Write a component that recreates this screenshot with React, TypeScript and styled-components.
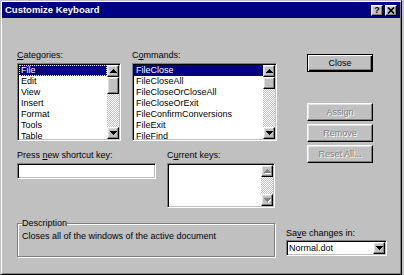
import React from 'react';
import styled, { createGlobalStyle, css } from 'styled-components';

const Global = createGlobalStyle`
  html, body { margin: 0; padding: 0; background: #c0c0c0; }
  body {
    width: 404px; height: 275px; overflow: hidden;
    font-family: "Liberation Sans", Arial, sans-serif;
    font-size: 9px; color: #000;
  }
  * { box-sizing: border-box; }
`;

const raised = css`
  background: #c0c0c0;
  border: 1px solid;
  border-color: #fff #000 #000 #fff;
  box-shadow: inset -1px -1px 0 #808080, inset 1px 1px 0 #dfdfdf;
`;

const sunken = css`
  border: 1px solid;
  border-color: #808080 #fff #fff #808080;
  box-shadow: inset 1px 1px 0 #000, inset -1px -1px 0 #c0c0c0;
  padding: 1px;
`;

const Window = styled.div`
  width: 402px; height: 275px;
  background: #c0c0c0;
  border: 1px solid;
  border-color: #c0c0c0 #000 #000 #c0c0c0;
  box-shadow: inset 1px 1px 0 #fff, inset -1px -1px 0 #808080;
  padding: 1px;
  display: flex; flex-direction: column;
`;

const TitleBar = styled.div`
  height: 16px;
  background: #000080;
  color: #fff;
  font-weight: bold;
  font-size: 9.5px;
  display: flex; align-items: center;
  padding: 0 3px 0 3px;
`;

const TitleText = styled.div`
  flex: 1;
  line-height: 16px;
  white-space: nowrap;
`;

const CapButton = styled.div<{ $gap?: boolean }>`
  ${raised};
  width: 12px; height: 11px;
  margin-left: ${p => (p.$gap ? '2px' : '0')};
  display: flex; align-items: center; justify-content: center;
  color: #000; font-weight: bold; font-size: 9px; line-height: 9px;
`;

const Content = styled.div`
  flex: 1;
  display: flex;
  padding-left: 15px;
`;

const LeftPane = styled.div`
  width: 260px;
  display: flex; flex-direction: column;
  padding-top: 31px;
`;

const Row = styled.div<{ $mt?: number }>`
  display: flex; gap: 11px;
  margin-top: ${p => p.$mt ?? 0}px;
`;

const Field = styled.div<{ $w: number }>`
  width: ${p => p.$w}px;
  display: flex; flex-direction: column;
`;

const Label = styled.div`
  line-height: 13px;
  margin-bottom: 1px;
  white-space: nowrap;
`;

const ListBox = styled.div<{ $h: number }>`
  ${sunken};
  height: ${p => p.$h}px;
  background: #fff;
  display: flex;
`;

const Items = styled.div`
  flex: 1; overflow: hidden;
`;

const Item = styled.div<{ $sel?: boolean; $focus?: boolean }>`
  height: 11px; line-height: 10px;
  padding-left: 2px;
  white-space: nowrap;
  ${p => p.$sel && css`background: #000080; color: #fff;`}
  ${p => p.$focus && css`outline: 1px dotted #ffff80; outline-offset: -1px;`}
`;

const SBar = styled.div`
  width: 12px;
  display: flex; flex-direction: column;
`;

const SButton = styled.div`
  ${raised};
  width: 12px; height: 12px;
  display: flex; align-items: center; justify-content: center;
`;

const Track = styled.div`
  flex: 1;
  background: repeating-conic-gradient(#c0c0c0 0 25%, #fff 0 50%) 0 0 / 2px 2px;
`;

const Thumb = styled.div<{ $h: number }>`
  ${raised};
  height: ${p => p.$h}px;
`;

const TextInput = styled.div`
  ${sunken};
  height: 16px;
  background: #fff;
`;

const GroupBox = styled.fieldset`
  margin: 9px 0 0 0;
  padding: 0 4px;
  width: 258px; height: 40px;
  border: 1px solid #808080;
  box-shadow: inset 1px 1px 0 #fff, 1px 1px 0 #fff;
  min-width: 0;
`;

const Legend = styled.legend`
  padding: 0;
  line-height: 13px;
  background: #c0c0c0;
`;

const GroupText = styled.div`
  line-height: 13px;
  white-space: nowrap;
`;

const RightPane = styled.div`
  width: 101px;
  margin-left: 9px;
  display: flex; flex-direction: column;
`;

const PushButton = styled.div<{ $default?: boolean; $disabled?: boolean; $mt: number }>`
  width: 66px; height: 18px;
  margin-left: 21px;
  margin-top: ${p => p.$mt}px;
  display: flex; align-items: center; justify-content: center;
  ${p =>
    p.$default
      ? css`
          background: #c0c0c0;
          border: 1px solid #000;
          box-shadow: inset 1px 1px 0 #fff, inset -1px -1px 0 #000, inset -2px -2px 0 #808080;
        `
      : raised};
  ${p => p.$disabled && css`color: #808080; text-shadow: 1px 1px 0 #fff;`}
`;

const SaveLabel = styled(Label)`
  margin-top: 64px;
  margin-bottom: 0;
`;

const Combo = styled.div`
  ${sunken};
  height: 16px;
  background: #fff;
  display: flex; align-items: stretch;
`;

const ComboText = styled.div`
  flex: 1;
  line-height: 12px;
  padding-left: 1px;
`;

const ComboButton = styled(SButton)`
  height: auto;
`;

const Arrow: React.FC<{ down?: boolean; off?: boolean }> = ({ down, off }) => (
  <svg width="7" height="5" viewBox="0 0 7 5" shapeRendering="crispEdges">
    {off && (
      <polygon
        points={down ? '1,1 8,1 4.5,5' : '1,5 8,5 4.5,1'}
        fill="#fff"
      />
    )}
    <polygon points={down ? '0,0 7,0 3.5,4' : '0,4 7,4 3.5,0'} fill={off ? '#808080' : '#000'} />
  </svg>
);

const ScrollBar: React.FC<{ thumb?: number; off?: boolean }> = ({ thumb, off }) => (
  <SBar>
    <SButton><Arrow off={off} /></SButton>
    <Track>{thumb ? <Thumb $h={thumb} /> : null}</Track>
    <SButton><Arrow down off={off} /></SButton>
  </SBar>
);

const categories = ['File', 'Edit', 'View', 'Insert', 'Format', 'Tools', 'Table'];
const commands = [
  'FileClose',
  'FileCloseAll',
  'FileCloseOrCloseAll',
  'FileCloseOrExit',
  'FileConfirmConversions',
  'FileExit',
  'FileFind',
];

export default function App() {
  return (
    <>
      <Global />
      <Window>
        <TitleBar>
          <TitleText>Customize Keyboard</TitleText>
          <CapButton>?</CapButton>
          <CapButton $gap>
            <svg width="8" height="7" viewBox="0 0 8 7">
              <path d="M1 0.5 L7 6.5 M7 0.5 L1 6.5" stroke="#000" strokeWidth="1.7" />
            </svg>
          </CapButton>
        </TitleBar>
        <Content>
          <LeftPane>
            <Row>
              <Field $w={104}>
                <Label><u>C</u>ategories:</Label>
                <ListBox $h={78}>
                  <Items>
                    {categories.map((c, i) => (
                      <Item key={c} $sel={i === 0} $focus={i === 0}>{c}</Item>
                    ))}
                  </Items>
                  <ScrollBar thumb={17} />
                </ListBox>
              </Field>
              <Field $w={145}>
                <Label>C<u>o</u>mmands:</Label>
                <ListBox $h={78}>
                  <Items>
                    {commands.map((c, i) => (
                      <Item key={c} $sel={i === 0}>{c}</Item>
                    ))}
                  </Items>
                  <ScrollBar thumb={12} />
                </ListBox>
              </Field>
            </Row>
            <Row $mt={8}>
              <Field $w={139}>
                <Label>Press <u>n</u>ew shortcut key:</Label>
                <TextInput />
              </Field>
              <Field $w={108}>
                <Label>C<u>u</u>rrent keys:</Label>
                <ListBox $h={45}>
                  <Items />
                  <ScrollBar off />
                </ListBox>
              </Field>
            </Row>
            <GroupBox>
              <Legend>Description</Legend>
              <GroupText>Closes all of the windows of the active document</GroupText>
            </GroupBox>
          </LeftPane>
          <RightPane>
            <PushButton $default $mt={36}>Close</PushButton>
            <PushButton $disabled $mt={31}>Assign</PushButton>
            <PushButton $disabled $mt={3}>Remove</PushButton>
            <PushButton $disabled $mt={3}>Reset All...</PushButton>
            <SaveLabel>Sa<u>v</u>e changes in:</SaveLabel>
            <Combo>
              <ComboText>Normal.dot</ComboText>
              <ComboButton><Arrow down /></ComboButton>
            </Combo>
          </RightPane>
        </Content>
      </Window>
    </>
  );
}
